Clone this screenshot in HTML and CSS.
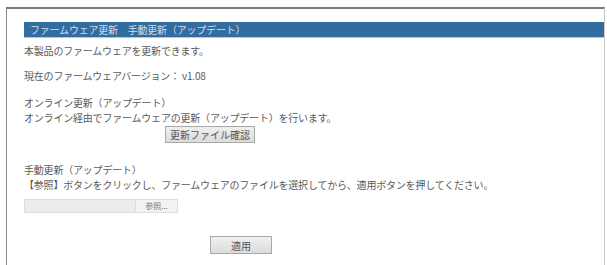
FILE: index.html
```html
<!DOCTYPE html>
<html lang="ja">
<head>
<meta charset="utf-8">
<link rel="stylesheet" href="styles.css">
</head>
<body>
<div class="frame">
  <div class="titlebar">ファームウェア更新　手動更新（アップデート）</div>
  <p class="line l1">本製品のファームウェアを更新できます。</p>
  <p class="line l2">現在のファームウェアバージョン： v1.08</p>
  <div class="section online">
    <p class="line">オンライン更新（アップデート）</p>
    <p class="line">オンライン経由でファームウェアの更新（アップデート）を行います。</p>
    <div class="check-row"><span class="btn btn-check">更新ファイル確認</span></div>
  </div>
  <div class="section manual">
    <p class="line">手動更新（アップデート）</p>
    <p class="line">【参照】ボタンをクリックし、ファームウェアのファイルを選択してから、適用ボタンを押してください。</p>
    <div class="file-row"><span class="file-field"></span><span class="file-btn">参照...</span></div>
    <div class="apply-row"><span class="btn btn-apply">適用</span></div>
  </div>
</div>
</body>
</html>
```
FILE: styles.css
```css
html, body {
  margin: 0;
  padding: 0;
  background: #fff;
}
body {
  font-family: "Noto Sans CJK JP", "Noto Sans", sans-serif;
  font-size: 10px;
  color: #5a5a5a;
  overflow: hidden;
}
.frame {
  margin: 7px 0 0 6px;
  width: 580px;
  height: 243px;
  border-top: 2px solid #7a7a7a;
  border-left: 1px solid #8a8a8a;
  border-right: 1px solid #c8c8c8;
  padding: 13px 0 0 17px;
  box-sizing: content-box;
}
.titlebar {
  background: #336c9e;
  color: #cfdeef;
  height: 15px;
  line-height: 15px;
  padding-left: 6px;
  border-bottom: 1px solid #a9cbe6;
  letter-spacing: -0.2px;
}
.line {
  margin: 0;
  line-height: 15px;
  white-space: nowrap;
  letter-spacing: -0.2px;
}
.l1 { margin-top: 5px; }
.l2 { margin-top: 10px; }
.online { margin-top: 12px; }
.check-row {
  padding-left: 141px;
  margin-top: 1px;
}
.btn {
  display: inline-flex;
  align-items: center;
  justify-content: center;
  box-sizing: border-box;
  border: 1px solid #a8a8a8;
  background: linear-gradient(#efefef, #dcdcdc);
  color: #555;
}
.btn-check {
  width: 90px;
  height: 17px;
}
.manual { margin-top: 19px; }
.file-row {
  display: flex;
  margin-top: 7px;
  height: 14px;
}
.file-field {
  width: 112px;
  background: #ececec;
  border: 1px solid #dedede;
  box-sizing: border-box;
}
.file-btn {
  width: 42px;
  background: #f2f2f2;
  border: 1px solid #dedede;
  border-left: none;
  box-sizing: border-box;
  font-size: 8px;
  line-height: 12px;
  text-align: center;
  color: #777;
}
.apply-row {
  padding-left: 186px;
  margin-top: 23px;
}
.btn-apply {
  width: 62px;
  height: 18px;
}
```
